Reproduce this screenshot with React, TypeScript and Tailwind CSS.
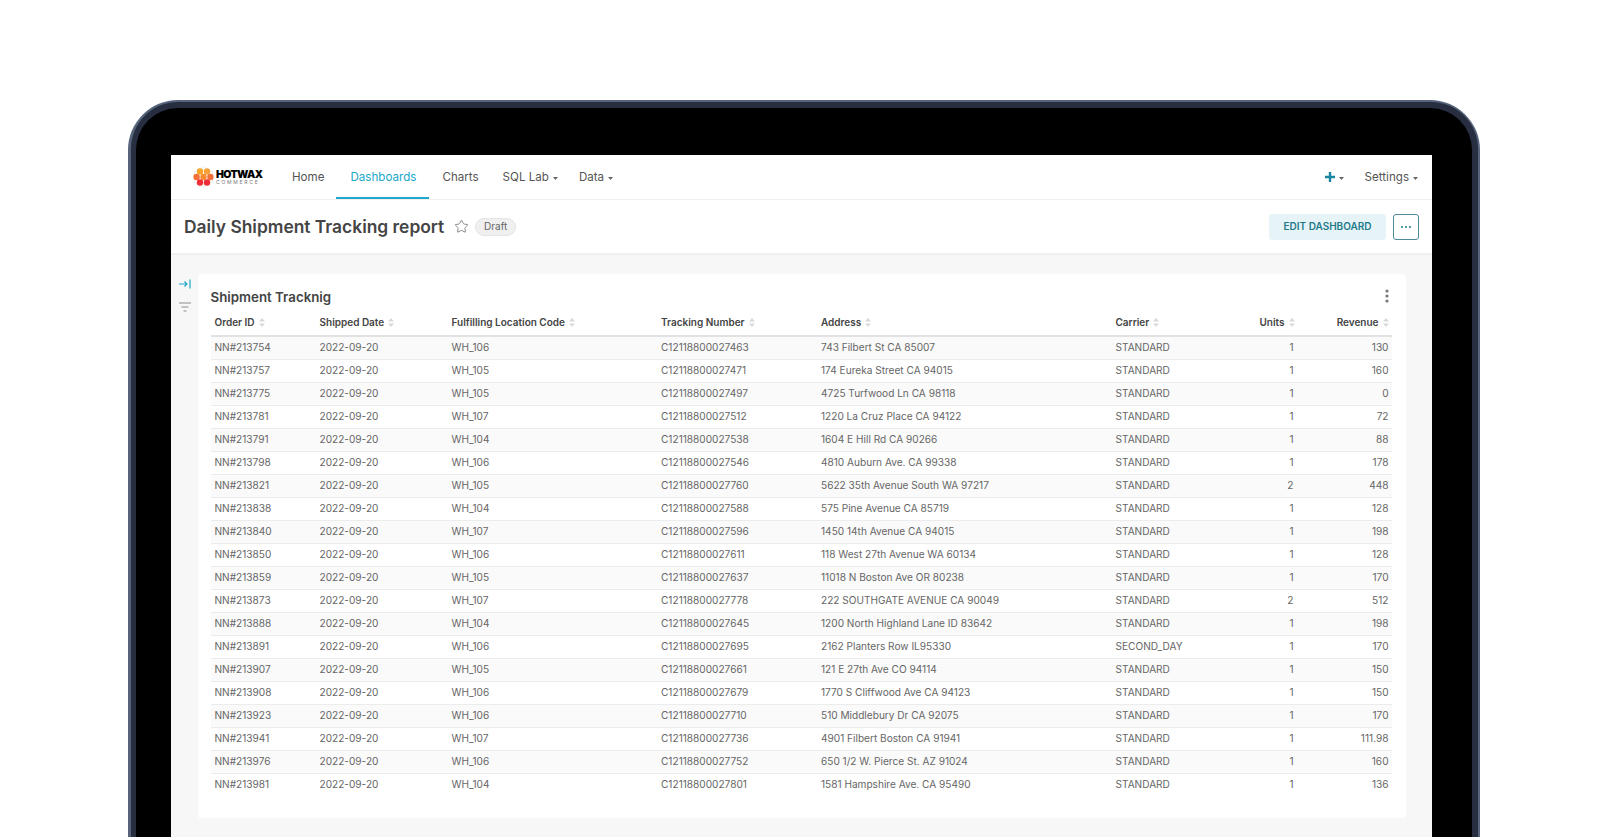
import { Star } from "lucide-react";

const rows = [
  ["NN#213754", "WH_106", "C12118800027463", "743 Filbert St CA 85007", "STANDARD", "1", "130"],
  ["NN#213757", "WH_105", "C12118800027471", "174 Eureka Street CA 94015", "STANDARD", "1", "160"],
  ["NN#213775", "WH_105", "C12118800027497", "4725 Turfwood Ln CA 98118", "STANDARD", "1", "0"],
  ["NN#213781", "WH_107", "C12118800027512", "1220 La Cruz Place CA 94122", "STANDARD", "1", "72"],
  ["NN#213791", "WH_104", "C12118800027538", "1604 E Hill Rd CA 90266", "STANDARD", "1", "88"],
  ["NN#213798", "WH_106", "C12118800027546", "4810 Auburn Ave. CA 99338", "STANDARD", "1", "178"],
  ["NN#213821", "WH_105", "C12118800027760", "5622 35th Avenue South WA 97217", "STANDARD", "2", "448"],
  ["NN#213838", "WH_104", "C12118800027588", "575 Pine Avenue CA 85719", "STANDARD", "1", "128"],
  ["NN#213840", "WH_107", "C12118800027596", "1450 14th Avenue CA 94015", "STANDARD", "1", "198"],
  ["NN#213850", "WH_106", "C12118800027611", "118 West 27th Avenue WA 60134", "STANDARD", "1", "128"],
  ["NN#213859", "WH_105", "C12118800027637", "11018 N Boston Ave OR 80238", "STANDARD", "1", "170"],
  ["NN#213873", "WH_107", "C12118800027778", "222 SOUTHGATE AVENUE CA 90049", "STANDARD", "2", "512"],
  ["NN#213888", "WH_104", "C12118800027645", "1200 North Highland Lane ID 83642", "STANDARD", "1", "198"],
  ["NN#213891", "WH_106", "C12118800027695", "2162 Planters Row IL95330", "SECOND_DAY", "1", "170"],
  ["NN#213907", "WH_105", "C12118800027661", "121 E 27th Ave CO 94114", "STANDARD", "1", "150"],
  ["NN#213908", "WH_106", "C12118800027679", "1770 S Cliffwood Ave CA 94123", "STANDARD", "1", "150"],
  ["NN#213923", "WH_106", "C12118800027710", "510 Middlebury Dr CA 92075", "STANDARD", "1", "170"],
  ["NN#213941", "WH_107", "C12118800027736", "4901 Filbert Boston CA 91941", "STANDARD", "1", "111.98"],
  ["NN#213976", "WH_106", "C12118800027752", "650 1/2 W. Pierce St. AZ 91024", "STANDARD", "1", "160"],
  ["NN#213981", "WH_104", "C12118800027801", "1581 Hampshire Ave. CA 95490", "STANDARD", "1", "136"],
];

function Caret() {
  return (
    <svg width="5" height="3" viewBox="0 0 5 3" className="ml-[4px] mt-[1px] shrink-0">
      <path d="M0 0h5L2.5 3z" fill="#666" />
    </svg>
  );
}

function SortIcon() {
  return (
    <svg width="6" height="9" viewBox="0 0 6 9" className="ml-[4px] shrink-0">
      <path d="M3 0l3 3.6H0zM3 9L0 5.4h6z" fill="#d9d9d9" />
    </svg>
  );
}

function Logo() {
  return (
    <div className="ml-[22px] flex w-[85px] items-center">
      <svg width="21" height="22" viewBox="0 0 21 22" className="shrink-0">
        <path d="M10.5 0.5L19.5 5.5V16.5L10.5 21.5L1.5 16.5V5.5z" fill="none" stroke="#e4e4e4" strokeWidth="0.6" />
        <circle cx="7" cy="5.5" r="3.2" fill="#f6a52a" />
        <circle cx="14" cy="5.5" r="3.2" fill="#f6a13a" />
        <circle cx="3.6" cy="11" r="3.2" fill="#f2703a" />
        <circle cx="10.5" cy="11" r="3.2" fill="#f58a30" />
        <circle cx="17.4" cy="11" r="3.2" fill="#f2703a" />
        <circle cx="7" cy="16.5" r="3.2" fill="#ee2d36" />
        <circle cx="14" cy="16.5" r="3.2" fill="#ee2d36" />
      </svg>
      <div className="ml-[2px] flex flex-col">
        <span className="text-[10.5px] leading-[9px] font-black tracking-[-0.6px] text-black">HOTWAX</span>
        <span className="mt-[1px] text-[5px] leading-[5px] tracking-[1.75px] text-[#777]">COMMERCE</span>
      </div>
    </div>
  );
}

function Nav() {
  return (
    <div className="flex h-[45px] items-stretch border-b border-[#f0f0f0] text-[11.6px] text-[#555]">
      <Logo />
      <a className="flex items-center pl-[14px] pr-[12px] pt-[1px]">Home</a>
      <a className="flex items-center border-b-2 border-[#20a7c9] pl-[14px] pr-[13px] pt-[3px] text-[#20a7c9]">Dashboards</a>
      <a className="flex items-center px-[13px] pt-[1px]">Charts</a>
      <a className="ml-[11px] flex items-center pt-[1px]">SQL Lab<Caret /></a>
      <a className="ml-[21px] flex items-center pt-[1px]">Data<Caret /></a>
      <div className="ml-auto flex items-center pr-[14px] pt-[1px]">
        <svg width="10" height="10" viewBox="0 0 10 10" className="-mt-[1px]">
          <path d="M3.8 0h2.4v3.8H10v2.4H6.2V10H3.8V6.2H0V3.8h3.8z" fill="#1985a0" />
        </svg>
        <Caret />
        <span className="ml-[21px]">Settings</span>
        <Caret />
      </div>
    </div>
  );
}

function TitleBar() {
  return (
    <div className="flex h-[55px] items-center border-b-2 border-[#f0f0f0] pl-[13px] pr-[13px]">
      <h1 className="pt-[1px] text-[17.4px] font-semibold text-[#444]">Daily Shipment Tracking report</h1>
      <Star size={15} strokeWidth={1.6} className="ml-[10px] text-[#8a8a8a]" />
      <span className="ml-[6px] flex h-[18px] w-[41px] items-center justify-center rounded-full border border-[#e4e4e4] bg-[#f0f0f0] text-[10px] text-[#666]">
        Draft
      </span>
      <button className="ml-auto h-[26px] w-[117px] rounded-[3px] bg-[#e6f4f7] text-[10px] font-semibold text-[#1f7a8c]">
        EDIT DASHBOARD
      </button>
      <button className="ml-[7px] flex h-[26px] w-[26px] items-center justify-center rounded-[3px] border border-[#4f8a9c]">
        <svg width="10" height="2" viewBox="0 0 10 2">
          <circle cx="1" cy="1" r="1" fill="#1f7a8c" />
          <circle cx="5" cy="1" r="1" fill="#1f7a8c" />
          <circle cx="9" cy="1" r="1" fill="#1f7a8c" />
        </svg>
      </button>
    </div>
  );
}

function FilterRail() {
  return (
    <div className="flex w-[26.5px] flex-col items-center pl-[2px] pt-[5px]">
      <svg width="12" height="10" viewBox="0 0 12 10" fill="none">
        <path d="M0 5h8M5.5 2.5L8 5L5.5 7.5" stroke="#20a7c9" strokeWidth="1.2" />
        <path d="M11 0.5v9" stroke="#20a7c9" strokeWidth="1.2" />
      </svg>
      <svg width="12" height="10" viewBox="0 0 12 10" fill="none" className="mt-[13px]">
        <path d="M0 1h12M2.5 5h7M4.5 9h3" stroke="#8c8c8c" strokeWidth="1" />
      </svg>
    </div>
  );
}

function HeaderCell({ label, right }: { label: string; right?: boolean }) {
  return (
    <th className={right ? "border-b-2 border-[#e2e2e2] pl-[4px] pr-[3px] pb-[5px] text-[10px] font-semibold text-[#444]" : "border-b-2 border-[#e2e2e2] px-[4px] pb-[5px] text-[10px] font-semibold text-[#444]"}>
      <div className={right ? "flex items-center justify-end" : "flex items-center"}>
        {label}
        <SortIcon />
      </div>
    </th>
  );
}

function ShipmentTable() {
  return (
    <table className="w-[1181px] table-fixed border-collapse text-[10.1px] text-[#666]">
      <colgroup>
        <col className="w-[105px]" />
        <col className="w-[132px]" />
        <col className="w-[209.5px]" />
        <col className="w-[160px]" />
        <col className="w-[294.5px]" />
        <col className="w-[108px]" />
        <col className="w-[78px]" />
        <col className="w-[94px]" />
      </colgroup>
      <thead>
        <tr>
          <HeaderCell label="Order ID" />
          <HeaderCell label="Shipped Date" />
          <HeaderCell label="Fulfilling Location Code" />
          <HeaderCell label="Tracking Number" />
          <HeaderCell label="Address" />
          <HeaderCell label="Carrier" />
          <HeaderCell label="Units" right />
          <HeaderCell label="Revenue" right />
        </tr>
      </thead>
      <tbody>
        {rows.map((row, i) => (
          <tr key={row[0]} className={i % 2 === 0 ? "h-[23px] border-b border-[#ececec] bg-[#fafafa] last:border-b-transparent" : "h-[23px] border-b border-[#ececec] bg-white last:border-b-transparent"}>
            <td className="px-[4px] py-0">{row[0]}</td>
            <td className="px-[4px] py-0">2022-09-20</td>
            <td className="px-[4px] py-0">{row[1]}</td>
            <td className="px-[4px] py-0">{row[2]}</td>
            <td className="px-[4px] py-0">{row[3]}</td>
            <td className="px-[4px] py-0">{row[4]}</td>
            <td className="px-[4px] py-0 text-right">{row[5]}</td>
            <td className="pl-[4px] pr-[3px] py-0 text-right">{row[6]}</td>
          </tr>
        ))}
      </tbody>
    </table>
  );
}

export default function App() {
  return (
    <div className="h-[839px] overflow-hidden bg-white pt-[100px] pl-[128px] font-['Inter',sans-serif]">
      <div className="h-[737px] w-[1352px] overflow-hidden rounded-t-[50px] bg-[#56637a] px-[2.5px] pt-[2px]">
        <div className="h-full overflow-hidden rounded-t-[47px] bg-[#262e40] px-[5.5px] pt-[6px]">
          <div className="h-full overflow-hidden rounded-t-[42px] bg-black pl-[35px] pr-[40px] pt-[47px]">
            <div className="flex h-full flex-col bg-white">
              <Nav />
              <TitleBar />
              <div className="flex flex-1 items-start bg-[#f7f7f7] pl-0 pt-[19px]">
                <FilterRail />
                <div className="h-[544px] w-[1208px] rounded-[3px] bg-white px-[13px]">
                  <div className="relative h-[41px] pt-[14px] text-[13.3px] leading-[18px] font-semibold text-[#444]">
                    Shipment Tracknig
                    <svg width="4" height="14" viewBox="0 0 4 14" className="absolute right-[4px] top-[15px]">
                      <circle cx="2" cy="2" r="1.6" fill="#777" />
                      <circle cx="2" cy="7" r="1.6" fill="#777" />
                      <circle cx="2" cy="12" r="1.6" fill="#777" />
                    </svg>
                  </div>
                  <ShipmentTable />
                </div>
              </div>
            </div>
          </div>
        </div>
      </div>
    </div>
  );
}
